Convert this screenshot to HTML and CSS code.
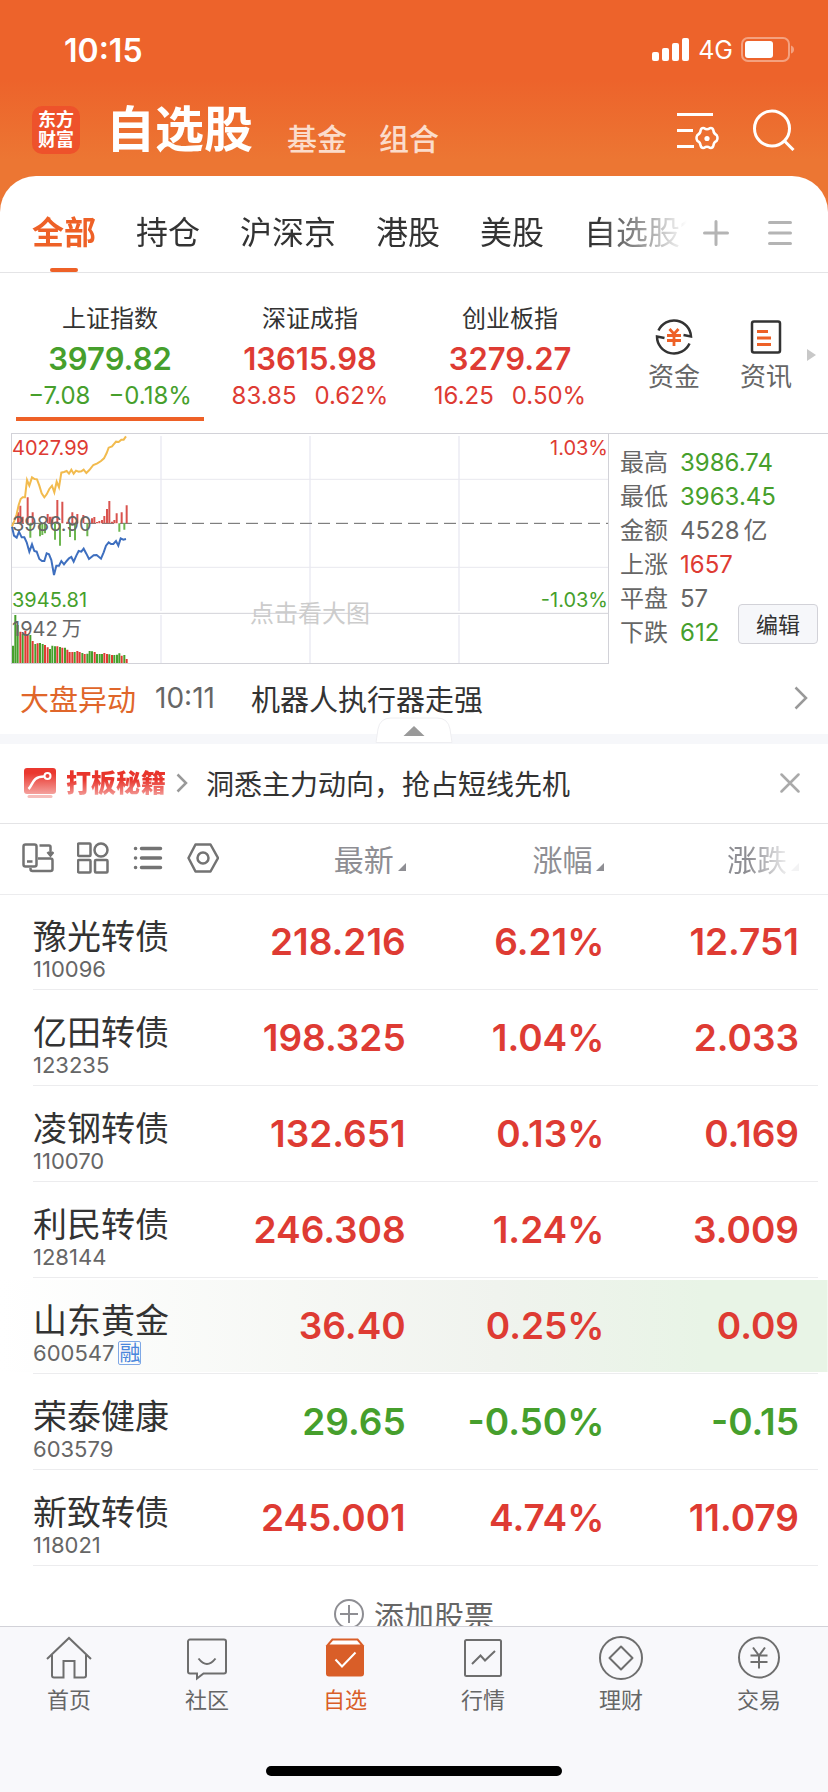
FILE: index.html
```html
<!DOCTYPE html>
<html lang="zh-CN">
<head>
    <meta charset="UTF-8">
    <meta name="viewport" content="width=device-width, initial-scale=1.0">
    <title>自选股</title>
    <link rel="stylesheet" href="styles.css">
</head>
<body>

<header class="header">
    <div class="status-bar">
        <span class="clock">10:15</span>
        <div class="status-icons">
            <svg width="38" height="24" viewBox="0 0 38 24" fill="#fff">
                <rect x="0" y="14" width="7" height="9" rx="2"/>
                <rect x="10" y="10" width="7" height="13" rx="2"/>
                <rect x="20" y="5" width="7" height="18" rx="2"/>
                <rect x="30" y="0" width="7" height="23" rx="2"/>
            </svg>
            <span class="network">4G</span>
            <svg width="54" height="26" viewBox="0 0 54 26">
                <rect x="1" y="1" width="47" height="23" rx="6" fill="none" stroke="#fff" stroke-opacity="0.4" stroke-width="2"/>
                <rect x="4" y="4" width="28" height="17" rx="3" fill="#fff"/>
                <path d="M50 8.500q3 1 3 4t-3 4z" fill="#fff" fill-opacity="0.4"/>
            </svg>
        </div>
    </div>

    <div class="title-bar">
        <div class="logo"><span>东方</span><span>财富</span></div>
        <h1>自选股</h1>
        <a class="section-link" href="#fund">基金</a>
        <a class="section-link" href="#group">组合</a>
        <div class="title-actions">
            <button type="button" aria-label="设置">
                <svg width="42" height="42" viewBox="0 0 42 42" fill="none" stroke="#fff" stroke-width="3">
                    <path d="M0 5.500h36M0 21.500h16M0 37.500h17"/>
                    <path d="M27.200 19.700q2.800 2.200 5.600 0q2.800-.6 3.600 2.200q.2 3.300 3.200 4.700q1.800 2.900 0 5.800q-3 1.400-3.200 4.700q-.8 2.800-3.600 2.200q-2.800-2.200-5.600 0q-2.800.6-3.600-2.200q-.2-3.300-3.200-4.700q-1.800-2.900 0-5.800q3-1.400 3.200-4.700q.8-2.800 3.600-2.200z" transform="translate(0 -.5)" stroke-width="2.500"/>
                    <circle cx="30" cy="29.500" r="2.600" fill="#fff" stroke="none"/>
                </svg>
            </button>
            <button type="button" aria-label="搜索">
                <svg width="42" height="42" viewBox="0 0 42 42" fill="none" stroke="#fff" stroke-width="3">
                    <circle cx="19" cy="19.500" r="17.500"/>
                    <path d="M31.500 32l9 9"/>
                </svg>
            </button>
        </div>
    </div>
</header>

<main class="sheet">
    <nav class="tabs">
        <div class="tab-list">
            <a class="active" href="#all">全部</a>
            <a href="#hold">持仓</a>
            <a href="#cn">沪深京</a>
            <a href="#hk">港股</a>
            <a href="#us">美股</a>
            <a href="#mine">自选股1</a>
        </div>
        <button type="button" aria-label="添加分组">
            <svg width="26" height="26" viewBox="0 0 26 26" stroke="#b4b4b4" stroke-width="3" stroke-linecap="round"><path d="M1.500 13h23M13 1.500v23"/></svg>
        </button>
        <button type="button" aria-label="分组管理">
            <svg width="26" height="26" viewBox="0 0 26 26" stroke="#b4b4b4" stroke-width="3" stroke-linecap="round"><path d="M2.500 2.500h21M2.500 13h21M2.500 23.500h21"/></svg>
        </button>
    </nav>

    <section class="indices">
        <button type="button" class="index down active">
            <span class="index-name">上证指数</span>
            <strong>3979.82</strong>
            <span class="index-change"><span>−7.08</span><span>−0.18%</span></span>
        </button>
        <button type="button" class="index up">
            <span class="index-name">深证成指</span>
            <strong>13615.98</strong>
            <span class="index-change"><span>83.85</span><span>0.62%</span></span>
        </button>
        <button type="button" class="index up">
            <span class="index-name">创业板指</span>
            <strong>3279.27</strong>
            <span class="index-change"><span>16.25</span><span>0.50%</span></span>
        </button>
        <div class="shortcuts">
            <a href="#money">
                <svg width="38" height="38" viewBox="0 0 38 38" fill="none" stroke="#333" stroke-width="2.500">
                    <path d="M3.500 12.500A17 17 0 0 1 36 18.500l-7.500-1.500"/>
                    <path d="M34.500 25.500A17 17 0 0 1 2 18.500l7.500 1.500"/>
                    <path d="M14.500 11l4.500 5 4.500-5M12 17.500h14M12 22.500h14M19 16v12" stroke="#ee6127" stroke-width="2.800"/>
                </svg>
                资金
            </a>
            <a href="#news">
                <svg width="38" height="38" viewBox="0 0 38 38" fill="none" stroke="#333" stroke-width="2.500">
                    <rect x="5" y="3.500" width="28" height="31" rx="2"/>
                    <path d="M10 13.500h11M10 20h14M10 26.500h14" stroke="#ee6127" stroke-width="2.800"/>
                </svg>
                资讯
            </a>
        </div>
        <span class="more-arrow"></span>
    </section>

    <section class="market">
        <div class="chart">
            <svg viewBox="33 24 1794 693" preserveAspectRatio="none" fill="none">
                <path d="M483 33v525M483 570v144M930 33v525M930 570v144M1377 33v525M1377 570v144" stroke="#f0f0f6" stroke-width="6"/>
                <path d="M33 163h1794M33 427h1794" stroke="#e8e8ee" stroke-width="3"/>
                <path d="M33 565h1794" stroke="#d2d2d8" stroke-width="3"/>
                <path d="M36 295h1791" stroke="#666" stroke-width="3" stroke-dasharray="36 18"/>
                <rect x="34.500" y="25.500" width="1791" height="690" stroke="#d2d2d8" stroke-width="3"/>
                <path class="bars-up" d="M54 295V262M61 295V242M68 295V275M83 295V217M98 295V262M143 295V267M150 295V275M157 295V275M172 295V225M187 295V230M202 295V290M217 295V262M232 295V267M250 295V270M276 295V280M283 295V276M291 295V291M298 295V288M306 295V285M313 295V273M321 295V252M328 295V228M336 295V290M343 295V285M350 295V265M365 295V262M380 295V241"/>
                <path class="bars-down" d="M91 295V338M120 295V334M127 295V330M135 295V325M165 295V344M180 295V362M210 295V336M225 295V346M262 295V334M358 295V320M373 295V314"/>
                <path d="M36 305L44 285 50 268 56 240 62 222 68 217 75 217 81 165 88 182 96 157 104 162 111 163 118 182 125 205 133 217 140 208 148 192 156 182 163 202 170 170 177 187 184 143 192 141 200 138 207 146 214 134 221 146 228 137 236 140 244 139 251 134 259 144 268 135 280 120 292 115 303 108 312 100 320 84 326 68 336 64 348 50 356 51 364 44 371 44 378 34" stroke="#f2bb4e" stroke-width="6"/>
                <path d="M36 305L42 332 50 338 57 320 65 337 73 337 80 352 88 380 96 358 103 378 110 380 118 402 126 408 133 408 140 385 147 388 154 405 162 450 169 422 177 422 184 408 192 418 200 408 207 400 214 396 221 410 229 392 236 378 244 380 251 371 259 386 267 402 281 391 290 390 303 401 311 382 318 362 326 352 333 357 340 357 348 348 355 362 362 340 370 344 378 342" stroke="#3e6fbf" stroke-width="6"/>
                <path class="volume-down" d="M39 714V662M46 714V570M53 714V600M68 714V626M91 714V630M106 714V657M120 714V654M128 714V657M150 714V672M157 714V662M165 714V664M180 714V666M195 714V668M224 714V681M247 714V684M262 714V686M269 714V678M276 714V679M291 714V687M299 714V687M306 714V687M328 714V688M343 714V690M351 714V689M358 714V685M373 714V690"/>
                <path class="volume-up" d="M61 714V620M76 714V618M83 714V628M98 714V648M113 714V655M135 714V660M143 714V667M172 714V664M187 714V668M202 714V674M209 714V681M217 714V681M232 714V678M239 714V681M254 714V687M284 714V681M313 714V684M321 714V687M336 714V690M365 714V692M380 714V702"/>
            </svg>
            <span class="chart-label high up">4027.99</span>
            <span class="chart-label high right up">1.03%</span>
            <span class="chart-label middle">3986.90</span>
            <span class="chart-label low down">3945.81</span>
            <span class="chart-label low right down">-1.03%</span>
            <span class="chart-label volume">1942<span class="unit">万</span></span>
            <span class="chart-hint">点击看大图</span>
        </div>
        <div class="stats">
            <dl>
                <dt>最高</dt><dd class="down">3986.74</dd>
                <dt>最低</dt><dd class="down">3963.45</dd>
                <dt>金额</dt><dd>4528<span class="unit">亿</span></dd>
                <dt>上涨</dt><dd class="up">1657</dd>
                <dt>平盘</dt><dd>57</dd>
                <dt>下跌</dt><dd class="down">612</dd>
            </dl>
            <button type="button" class="edit-btn">编辑</button>
        </div>
    </section>

    <a class="alert" href="#alert">
        <span class="alert-tag">大盘异动</span>
        <time>10:11</time>
        <span class="alert-text">机器人执行器走强</span>
        <svg width="14" height="24" viewBox="0 0 14 24" fill="none" stroke="#999" stroke-width="2.500"><path d="M1.500 1.500L12 12 1.500 22.500"/></svg>
    </a>

    <div class="divider">
        <button type="button" class="collapse" aria-label="收起">
            <svg width="78" height="26" viewBox="0 0 78 26">
                <path d="M1 25.500L3 12Q5 1 16 1H62Q73 1 75 12L77 25.500z" fill="#fff" stroke="#eeeef1"/>
                <path d="M28.500 19L39 9l10.500 10z" fill="#999"/>
            </svg>
        </button>
    </div>

    <section class="promo">
        <svg width="32" height="32" viewBox="0 0 32 32" fill="none">
            <defs>
                <linearGradient id="promo-red" x1="0" y1="0" x2="0" y2="1">
                    <stop offset="0.2" stop-color="#ea382f"/>
                    <stop offset="1" stop-color="#f4a19d"/>
                </linearGradient>
            </defs>
            <rect width="32" height="26" y="1" rx="3" fill="url(#promo-red)"/>
            <path d="M4.500 22C9 18 8 9.500 20 9.500" stroke="#fff" stroke-width="2.500"/>
            <circle cx="23.500" cy="9" r="3" stroke="#fff" stroke-width="2"/>
            <path d="M5 29.500h22" stroke="#f6bdba" stroke-width="3" stroke-linecap="round"/>
        </svg>
        <strong>打板秘籍</strong>
        <svg width="12" height="20" viewBox="0 0 12 20" fill="none" stroke="#999" stroke-width="2.500"><path d="M1.500 1.500L10 10 1.500 18.500"/></svg>
        <a href="#promo">洞悉主力动向，抢占短线先机</a>
        <button type="button" aria-label="关闭">
            <svg width="20" height="20" viewBox="0 0 20 20" stroke="#aaa" stroke-width="2.500" stroke-linecap="round"><path d="M1.500 1.500l17 17M18.500 1.500l-17 17"/></svg>
        </button>
    </section>

    <table class="stocks">
        <thead>
            <tr>
                <th>
                    <div class="tools">
                        <button type="button" aria-label="横屏">
                            <svg width="32" height="32" viewBox="0 0 32 32">
                                <rect x="1.500" y="2.500" width="13" height="22" rx="2"/>
                                <path d="M5 19.500h5.500M17.500 3.500H27a1.500 1.500 0 0 1 1.500 1.500v7M25.500 10l3 3.500 3-3.500M16 16.500h12.500a2 2 0 0 1 2 2v8.500a2 2 0 0 1-2 2H10.500a2 2 0 0 1-2-2v-1"/>
                            </svg>
                        </button>
                        <button type="button" aria-label="宫格">
                            <svg width="32" height="32" viewBox="0 0 32 32">
                                <rect x="1" y="1.500" width="12.500" height="12.500" rx="1"/>
                                <circle cx="24" cy="8" r="6.500"/>
                                <rect x="1" y="18" width="12.500" height="12.500" rx="1"/>
                                <rect x="18" y="18" width="12.500" height="12.500" rx="1"/>
                            </svg>
                        </button>
                        <button type="button" aria-label="列表">
                            <svg width="32" height="32" viewBox="0 0 32 32" stroke-linecap="round">
                                <path d="M9.500 6.500h19M9.500 16h19M9.500 25.500h19M3.500 6.500h.1M3.500 16h.1M3.500 25.500h.1" stroke-width="3.500"/>
                            </svg>
                        </button>
                        <button type="button" aria-label="指标设置">
                            <svg width="32" height="32" viewBox="0 0 32 32" stroke-linejoin="round">
                                <path d="M8.500 2.500h15L31 16l-7.500 13.500h-15L1.500 16z"/>
                                <circle cx="16" cy="16" r="5.500"/>
                            </svg>
                        </button>
                    </div>
                </th>
                <th><span class="sort">最新</span></th>
                <th><span class="sort">涨幅</span></th>
                <th><span class="sort faded">涨跌</span></th>
            </tr>
        </thead>
        <tbody>
            <tr class="up">
                <td><b>豫光转债</b><small>110096</small></td>
                <td>218.216</td>
                <td>6.21%</td>
                <td>12.751</td>
            </tr>
            <tr class="up">
                <td><b>亿田转债</b><small>123235</small></td>
                <td>198.325</td>
                <td>1.04%</td>
                <td>2.033</td>
            </tr>
            <tr class="up">
                <td><b>凌钢转债</b><small>110070</small></td>
                <td>132.651</td>
                <td>0.13%</td>
                <td>0.169</td>
            </tr>
            <tr class="up">
                <td><b>利民转债</b><small>128144</small></td>
                <td>246.308</td>
                <td>1.24%</td>
                <td>3.009</td>
            </tr>
            <tr class="up flash">
                <td><b>山东黄金</b><small>600547<i>融</i></small></td>
                <td>36.40</td>
                <td>0.25%</td>
                <td>0.09</td>
            </tr>
            <tr class="down">
                <td><b>荣泰健康</b><small>603579</small></td>
                <td>29.65</td>
                <td>-0.50%</td>
                <td>-0.15</td>
            </tr>
            <tr class="up">
                <td><b>新致转债</b><small>118021</small></td>
                <td>245.001</td>
                <td>4.74%</td>
                <td>11.079</td>
            </tr>
        </tbody>
    </table>

    <button type="button" class="add-stock">
        <svg width="30" height="30" viewBox="0 0 30 30" fill="none" stroke="#8e8e93" stroke-width="2"><circle cx="15" cy="15" r="14"/><path d="M6 15h18M15 6v18"/></svg>
        添加股票
    </button>
</main>

<footer class="bottom-bar">
    <nav>
        <a href="#home">
            <svg width="46" height="46" viewBox="0 0 46 46"><path d="M1 24L23 3l22 21M6 20v20.500a2 2 0 0 0 2 2h9.500V26h11v16.500H38a2 2 0 0 0 2-2V20"/></svg>
            首页
        </a>
        <a href="#community">
            <svg width="46" height="46" viewBox="0 0 46 46"><path d="M6 4.500h34a2 2 0 0 1 2 2v30a2 2 0 0 1-2 2H19.500L13 43.500v-5H6a2 2 0 0 1-2-2v-30a2 2 0 0 1 2-2zM14.500 23.500q8.500 11 17 0"/></svg>
            社区
        </a>
        <a class="active" href="#watchlist">
            <svg width="46" height="46" viewBox="0 0 46 46">
                <path d="M10 3.500h26l6 7v28a3 3 0 0 1-3 3H7a3 3 0 0 1-3-3v-28z" fill="#d95e28" stroke="none"/>
                <path d="M11 5.500h24l3.500 4h-31z" fill="#fff" stroke="none"/>
                <path d="M13.500 24.500l6.500 7 13.500-14" stroke="#fff"/>
            </svg>
            自选
        </a>
        <a href="#quotes">
            <svg width="46" height="46" viewBox="0 0 46 46"><rect x="5" y="5" width="36" height="36" rx="1.500"/><path d="M12 29l8.500-8.500 4.500 5L35 16"/></svg>
            行情
        </a>
        <a href="#wealth">
            <svg width="46" height="46" viewBox="0 0 46 46"><circle cx="23" cy="23" r="21"/><path d="M23 11.500L34.500 23 23 34.500 11.500 23z" stroke-linejoin="round"/></svg>
            理财
        </a>
        <a href="#trade">
            <svg width="46" height="46" viewBox="0 0 46 46"><circle cx="23" cy="22.500" r="20"/><path d="M17 12.500l6 8 6-8M14.500 20.500h17M14.500 27h17M23 20.500V33.500"/></svg>
            交易
        </a>
    </nav>
    <div class="home-indicator"></div>
</footer>

</body>
</html>
```

FILE: styles.css
```css
* {
    box-sizing: border-box;
}

body {
    display: flex;
    flex-direction: column;
    height: 100vh;
    margin: 0;
    background-color: #fff;
    color: #333;
    font-family: Inter, "Noto Sans CJK SC", sans-serif;
}

a {
    color: inherit;
    text-decoration: none;
}

button {
    padding: 0;
    border: none;
    background: none;
    color: inherit;
    font: inherit;
    cursor: pointer;
}

svg {
    display: block;
    flex-shrink: 0;
}

.up {
    color: #de3b33;
}

.down {
    color: #469f2c;
}

.unit {
    margin-left: 4px;
}

/* header */
.header {
    flex-shrink: 0;
    padding-bottom: 62px;
    background: linear-gradient(#ed632b 80px, #ec7633 160px);
    color: #fff;
}

.status-bar {
    display: flex;
    align-items: center;
    justify-content: space-between;
    height: 100px;
    padding: 0 33px 0 64px;
}

.clock {
    font-size: 32px;
    font-weight: 600;
}

.status-icons {
    display: flex;
    align-items: center;
    gap: 8px;
}

.network {
    font-size: 25px;
    font-weight: 400;
}

.title-bar {
    display: flex;
    align-items: flex-end;
    height: 54px;
    padding: 0 33px 0 32px;
    line-height: 48px;
}

.logo {
    display: flex;
    flex-direction: column;
    justify-content: center;
    width: 48px;
    height: 48px;
    border-radius: 10px;
    background-color: #ee522b;
    font-size: 18px;
    font-weight: 700;
    line-height: 20px;
    text-align: center;
}

h1 {
    margin: 0 34px 0 26px;
    font-size: 49px;
    font-weight: 700;
}

.section-link {
    margin-right: 32px;
    color: #fbdccb;
    font-size: 30px;
    font-weight: 500;
    line-height: 30px;
}

.title-actions {
    display: flex;
    gap: 34px;
    margin-left: auto;
    padding-bottom: 3px;
}

/* white sheet */
.sheet {
    flex: 1;
    min-height: 0;
    margin-top: -40px;
    overflow-y: auto;
    scrollbar-width: none;
    border-radius: 36px 36px 0 0;
    background-color: #fff;
}

.tabs {
    display: flex;
    align-items: center;
    gap: 38px;
    height: 97px;
    padding: 18px 35px 0 0;
    border-bottom: 1px solid #e4e4e6;
}

.tab-list {
    display: flex;
    flex: 1;
    gap: 40px;
    min-width: 0;
    margin-right: -22px;
    padding-left: 32px;
    overflow: hidden;
    font-size: 32px;
    line-height: 78px;
    white-space: nowrap;
    mask-image: linear-gradient(to left, transparent 0, #000 90px);
}

.tab-list .active {
    position: relative;
    color: #ee6127;
    font-weight: 700;
}

.tab-list .active::after {
    content: "";
    position: absolute;
    bottom: 0;
    left: 50%;
    width: 28px;
    height: 4px;
    margin-left: -14px;
    border-radius: 2px;
    background-color: #ee6127;
}

/* indices */
.indices {
    display: grid;
    grid-template-columns: repeat(3, 200fr) 184fr 34fr;
    align-items: center;
    height: 160px;
    padding-left: 10px;
}

.index {
    display: flex;
    flex-direction: column;
    align-items: center;
    align-self: start;
    height: 148px;
    margin: 0 6px;
    padding-top: 30px;
    border-bottom: 4px solid transparent;
}

.index.active {
    border-bottom-color: #ee6127;
}

.index-name {
    color: #333;
    font-size: 24px;
    line-height: 32px;
}

.index strong {
    font-size: 31px;
    font-weight: 600;
    line-height: 48px;
}

.index-change {
    display: flex;
    gap: 18px;
    font-size: 24px;
    line-height: 26px;
}

.shortcuts {
    display: flex;
    justify-content: center;
    gap: 40px;
    padding: 8px 0 0 36px;
    color: #666;
    font-size: 26px;
    line-height: 38px;
}

.shortcuts a {
    display: flex;
    flex-direction: column;
    align-items: center;
    gap: 2px;
}

.more-arrow {
    justify-self: center;
    margin-top: 4px;
    border: 6px solid transparent;
    border-left: 9px solid #c8c8c8;
    border-right: none;
}

/* chart */
.market {
    display: grid;
    grid-template-columns: 1fr 219px;
    padding-left: 11px;
}

.chart {
    position: relative;
    height: 231px;
}

.chart > svg {
    width: 100%;
    height: 100%;
}

.bars-up {
    stroke: #d9534e;
    stroke-width: 6;
}

.bars-down {
    stroke: #6db650;
    stroke-width: 6;
}

.volume-up {
    stroke: #de3b33;
    stroke-width: 6;
}

.volume-down {
    stroke: #469f2c;
    stroke-width: 6;
}

.chart-label {
    position: absolute;
    left: 1px;
    font-size: 20px;
    line-height: 24px;
}

.chart-label.right {
    right: 1px;
    left: auto;
}

.chart-label.high {
    top: 3px;
}

.chart-label.middle {
    top: 79px;
    color: #666;
}

.chart-label.low {
    top: 155px;
}

.chart-label.volume {
    top: 184px;
    color: #666;
}

.chart-hint {
    position: absolute;
    top: 165px;
    width: 100%;
    color: #ccc;
    font-size: 24px;
    line-height: 32px;
    text-align: center;
}

.stats {
    position: relative;
    padding: 12px 0 0 11px;
    border-top: 1px solid #d2d2d8;
    color: #666;
    font-size: 24px;
}

.stats dl {
    display: grid;
    grid-template-columns: 60px 1fr;
    margin: 0;
    line-height: 34px;
}

.stats dd {
    margin: 0;
}

.edit-btn {
    position: absolute;
    right: 10px;
    bottom: 20px;
    width: 80px;
    height: 40px;
    padding-bottom: 3px;
    border: 1px solid #d2d2d8;
    border-radius: 4px;
    background-color: #f6f7fa;
    color: #333;
    font-size: 22px;
}

/* market alert */
.alert {
    display: flex;
    align-items: center;
    height: 70px;
    padding: 0 20px 2px;
    font-size: 29px;
}

.alert-tag {
    color: #e0662a;
}

.alert time {
    width: 96px;
    margin-left: 19px;
    color: #666;
    font-size: 28px;
}

.alert svg {
    margin-left: auto;
}

.divider {
    position: relative;
    height: 10px;
    background-color: #f6f7fa;
}

.collapse {
    position: absolute;
    bottom: 1px;
    left: 50%;
    margin-left: -39px;
}

.promo {
    display: flex;
    align-items: center;
    height: 80px;
    padding: 0 28px 2px 24px;
    border-bottom: 1px solid #e4e4e6;
    font-size: 28px;
}

.promo strong {
    margin: 0 10px;
    background: linear-gradient(#e8352c 40%, #f2928e 85%);
    background-clip: text;
    color: transparent;
    font-size: 25px;
    font-weight: 900;
    line-height: 32px;
}

.promo a {
    margin-left: 18px;
}

.promo button {
    margin-left: auto;
}

/* stock list */
.stocks {
    width: 100%;
    border-collapse: collapse;
    table-layout: fixed;
}

.stocks th {
    height: 70px;
    padding: 0 0 2px;
    border-bottom: 1px solid #ececee;
    color: #8e8e93;
    font-size: 30px;
    font-weight: 400;
    text-align: right;
}

.stocks th:nth-child(1) {
    width: 28%;
}

.stocks th:nth-child(2) {
    width: 21%;
}

.stocks th:nth-child(3) {
    width: 24%;
}

.tools {
    display: flex;
    gap: 23px;
    padding-left: 22px;
}

.tools svg {
    fill: none;
    stroke: #737373;
    stroke-width: 2.5;
}

.sort::after {
    content: "";
    display: inline-block;
    margin-left: 4px;
    border-bottom: 8px solid #8e8e93;
    border-left: 8px solid transparent;
}

.sort.faded {
    display: inline-block;
    mask-image: linear-gradient(to left, rgba(0, 0, 0, 0.1) 10px, #000 50px);
}

.stocks td {
    height: 96px;
    padding: 0 0 2px;
    background: linear-gradient(#ececee, #ececee) 0 100% / 100% 1px no-repeat;
    font-size: 37px;
    font-weight: 600;
    text-align: right;
}

.stocks td:first-child {
    padding: 14px 0 0 33px;
    background-position: 33px 100%;
    color: #333;
    text-align: left;
}

.stocks th:last-child,
.stocks td:last-child {
    padding-right: 29px;
}

.stocks td:last-child {
    background-size: calc(100% - 10px) 1px;
}

.stocks b {
    display: block;
    font-size: 34px;
    font-weight: 400;
    line-height: 40px;
}

.stocks small {
    display: flex;
    align-items: center;
    gap: 4px;
    color: #666;
    font-size: 22px;
    font-weight: 400;
    line-height: 24px;
}

.stocks i {
    border: 1px solid #7fa8e6;
    border-radius: 2px;
    color: #4a86dc;
    font-size: 21px;
    font-style: normal;
    line-height: 22px;
}

.flash {
    background: linear-gradient(to right, #fff, #f0f3ee 60%, #e8f4e6 85%) 0 2px / 100% 92px no-repeat;
}

.add-stock {
    display: flex;
    align-items: center;
    gap: 10px;
    height: 96px;
    margin: 0 auto;
    color: #666;
    font-size: 30px;
}

/* bottom bar */
.bottom-bar {
    flex-shrink: 0;
    height: 166px;
    border-top: 1px solid #d2d2d8;
    background-color: #f8f8fb;
}

.bottom-bar nav {
    display: grid;
    grid-template-columns: repeat(6, 1fr);
    height: 139px;
    padding-top: 8px;
    color: #666;
    font-size: 22px;
    line-height: 32px;
}

.bottom-bar a {
    display: flex;
    flex-direction: column;
    align-items: center;
    gap: 3px;
}

.bottom-bar svg {
    fill: none;
    stroke: #6e6e6e;
    stroke-width: 2;
}

.bottom-bar .active {
    color: #d95e28;
}

.home-indicator {
    width: 296px;
    height: 10px;
    margin: 0 auto;
    border-radius: 5px;
    background-color: #000;
}
```
